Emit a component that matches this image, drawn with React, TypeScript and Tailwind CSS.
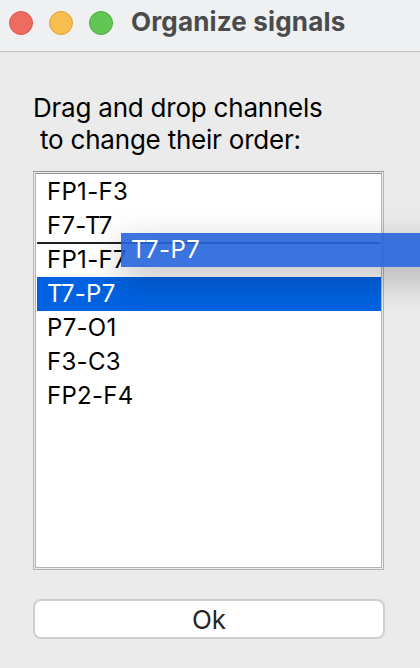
import clsx from "clsx";

const channels = ["FP1-F3", "F7-T7", "FP1-F7", "T7-P7", "P7-O1", "F3-C3", "FP2-F4"];
const selected = "T7-P7";

const TitleBar = () => {
  return (
    <div className="flex h-13 shrink-0 border-b border-[#c2c3c6] bg-[#eff0f2] pl-[9px]">
      <div className="flex gap-4 pt-[11px]">
        <span className="size-6 rounded-full border border-[#d9574c] bg-[#ed6b5f]" />
        <span className="size-6 rounded-full border border-[#dba23f] bg-[#f6be4f]" />
        <span className="size-6 rounded-full border border-[#4dab3d] bg-[#62c655]" />
      </div>
      <h1 className="ml-[18px] pt-[6px] text-[26px] leading-8 font-bold tracking-[0.17px] whitespace-nowrap text-[#4a4b4c]">
        Organize signals
      </h1>
    </div>
  );
};

const ChannelList = () => {
  return (
    <div className="relative mt-[15px] h-[399px] w-[351px] border border-[#b4b4b4] border-t-[#929292] bg-[#ececec] p-px">
      <ul className="h-full border border-[#b4b4b4] border-t-[#929292] bg-white pt-px pl-px">
        {channels.map((name) => (
          <li
            key={name}
            className={clsx(
              "h-[34px] pl-[10px] text-2xl leading-[34px] tracking-[0.3px] whitespace-nowrap",
              name === selected ? "bg-[#0062e1] text-white" : "text-black"
            )}
          >
            {name}
          </li>
        ))}
      </ul>
      {/* drop indicator */}
      <div className="absolute top-[70px] left-[3px] h-[2px] w-[343px] bg-[#231f20]" />
      {/* row being dragged */}
      <div className="absolute top-[61px] left-[87px] h-[34px] w-[344px] bg-[#2664db]/90 pl-[10px] text-2xl leading-[34px] tracking-[0.4px] text-white shadow-[0_12px_36px_rgba(0,0,0,0.26)]">
        {selected}
      </div>
    </div>
  );
};

const App = () => {
  return (
    <div className="flex h-screen w-full flex-col overflow-hidden bg-[#ebebeb] font-['Inter',sans-serif]">
      <TitleBar />
      <div className="flex flex-col pt-10 pl-[33px]">
        <p className="text-[26px] leading-8 tracking-[-0.22px] whitespace-pre text-black">
          {"Drag and drop channels\n to change their order:"}
        </p>
        <ChannelList />
        <button className="mt-[29px] h-10 w-[352px] rounded-lg border-2 border-[#cfcfca] bg-white pt-0.5 text-[26px] leading-[34px] text-[#262626]">
          Ok
        </button>
      </div>
    </div>
  );
};

export default App;
